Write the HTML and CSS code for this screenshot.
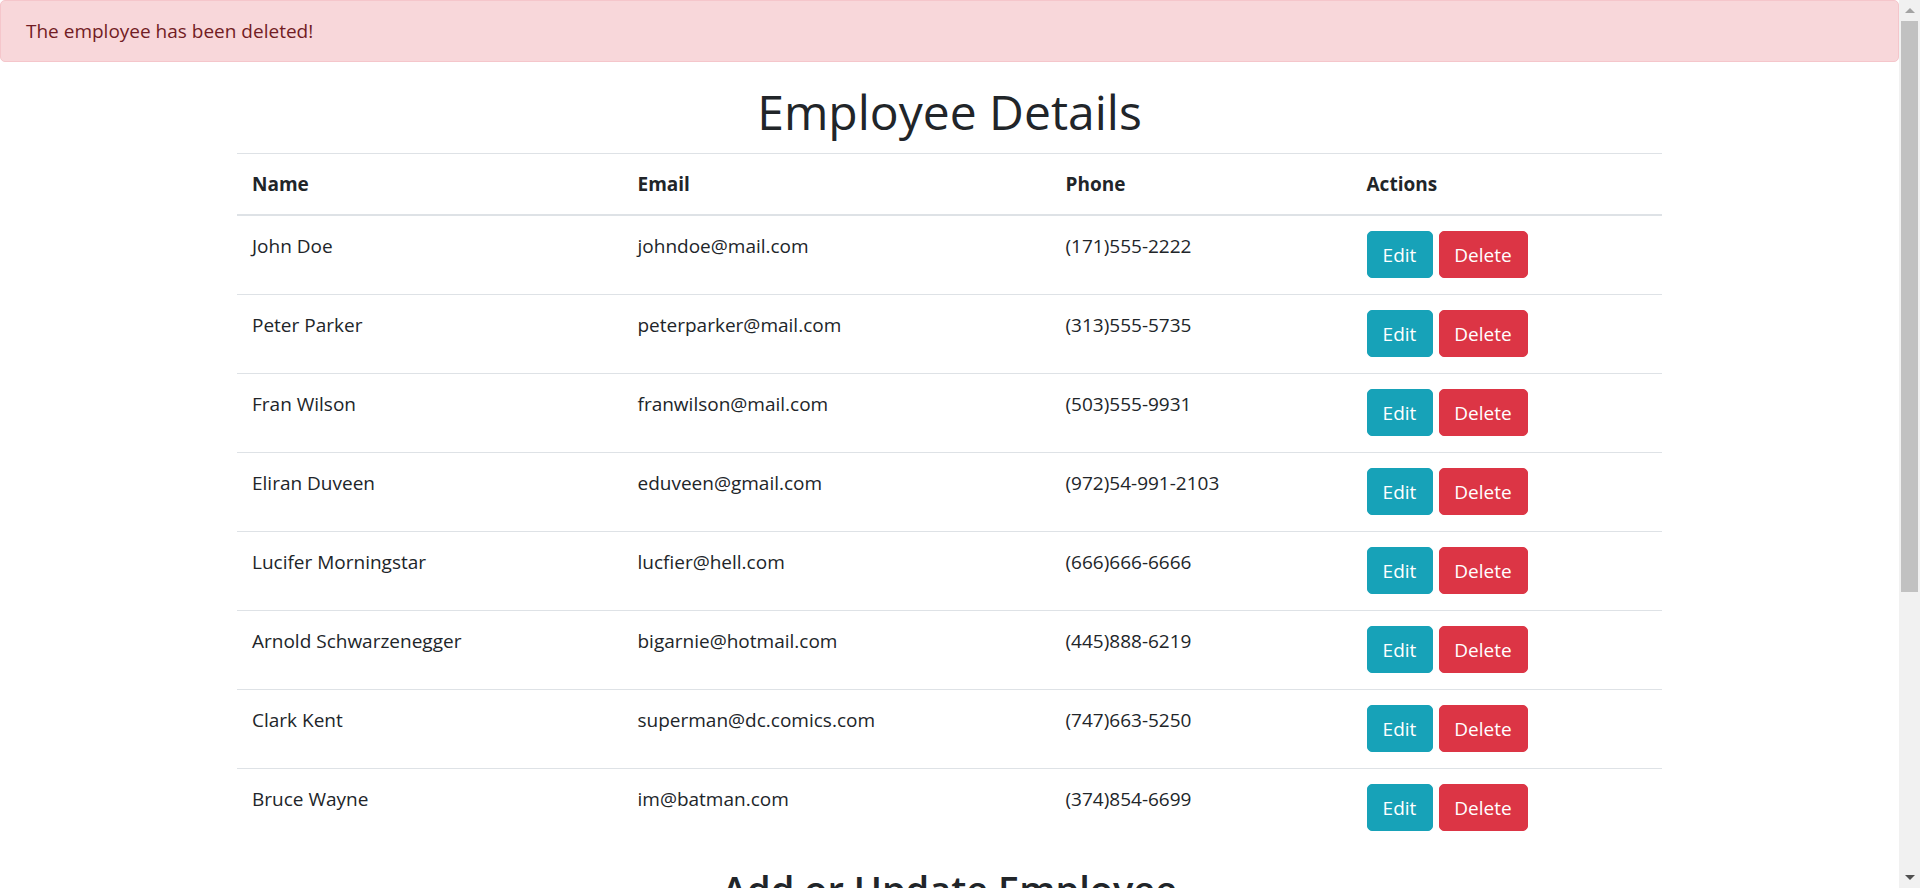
FILE: index.html
```html
<!DOCTYPE html>
<html lang="en">
<head>
<meta charset="utf-8">
<title>Employee Details</title>
<link rel="stylesheet" href="styles.css">
</head>
<body>
<div class="page">
  <main class="main">
    <div class="alert">The employee has been deleted!</div>
    <div class="container">
      <h1 class="title">Employee Details</h1>
      <table class="table">
        <colgroup>
          <col class="col-name"><col class="col-email"><col class="col-phone"><col class="col-actions">
        </colgroup>
        <thead>
          <tr><th>Name</th><th>Email</th><th>Phone</th><th>Actions</th></tr>
        </thead>
        <tbody>
          <tr><td>John Doe</td><td>johndoe@mail.com</td><td>(171)555-2222</td><td><div class="actions"><button class="btn btn-edit">Edit</button><button class="btn btn-delete">Delete</button></div></td></tr>
          <tr><td>Peter Parker</td><td>peterparker@mail.com</td><td>(313)555-5735</td><td><div class="actions"><button class="btn btn-edit">Edit</button><button class="btn btn-delete">Delete</button></div></td></tr>
          <tr><td>Fran Wilson</td><td>franwilson@mail.com</td><td>(503)555-9931</td><td><div class="actions"><button class="btn btn-edit">Edit</button><button class="btn btn-delete">Delete</button></div></td></tr>
          <tr><td>Eliran Duveen</td><td>eduveen@gmail.com</td><td>(972)54-991-2103</td><td><div class="actions"><button class="btn btn-edit">Edit</button><button class="btn btn-delete">Delete</button></div></td></tr>
          <tr><td>Lucifer Morningstar</td><td>lucfier@hell.com</td><td>(666)666-6666</td><td><div class="actions"><button class="btn btn-edit">Edit</button><button class="btn btn-delete">Delete</button></div></td></tr>
          <tr><td>Arnold Schwarzenegger</td><td>bigarnie@hotmail.com</td><td>(445)888-6219</td><td><div class="actions"><button class="btn btn-edit">Edit</button><button class="btn btn-delete">Delete</button></div></td></tr>
          <tr><td>Clark Kent</td><td>superman@dc.comics.com</td><td>(747)663-5250</td><td><div class="actions"><button class="btn btn-edit">Edit</button><button class="btn btn-delete">Delete</button></div></td></tr>
          <tr><td>Bruce Wayne</td><td>im@batman.com</td><td>(374)854-6699</td><td><div class="actions"><button class="btn btn-edit">Edit</button><button class="btn btn-delete">Delete</button></div></td></tr>
        </tbody>
      </table>
      <h2 class="subtitle">Add or Update Employee</h2>
      <form class="form">
        <div class="form-group"><label class="label">Name</label><input class="input" type="text"></div>
        <div class="form-group"><label class="label">Email</label><input class="input" type="email"></div>
        <div class="form-group"><label class="label">Phone</label><input class="input" type="text"></div>
        <button class="btn btn-submit" type="button">Submit</button>
      </form>
    </div>
  </main>
  <div class="scrollbar" aria-hidden="true">
    <div class="sb-btn"><span class="arrow-up"></span></div>
    <div class="sb-track"><div class="sb-thumb"></div></div>
    <div class="sb-btn"><span class="arrow-down"></span></div>
  </div>
</div>
</body>
</html>
```
FILE: styles.css
```css
html {
  font-size: 19px;
}
body {
  margin: 0;
  font-family: "Open Sans", "Segoe UI", sans-serif;
  font-size: 19px;
  line-height: 30px;
  color: #212529;
  background: #fff;
}
.page {
  display: flex;
  align-items: flex-start;
}
.main {
  flex: 1;
  min-width: 0;
}
.scrollbar {
  flex: 0 0 21px;
  height: 888px;
  display: flex;
  flex-direction: column;
  background: #f1f1f1;
}
.sb-btn {
  height: 21px;
  display: flex;
  align-items: center;
  justify-content: center;
}
.arrow-up {
  width: 0;
  height: 0;
  border-left: 5px solid transparent;
  border-right: 5px solid transparent;
  border-bottom: 5px solid #a3a3a3;
}
.arrow-down {
  width: 0;
  height: 0;
  border-left: 5px solid transparent;
  border-right: 5px solid transparent;
  border-top: 5px solid #505050;
}
.sb-track {
  flex: 1;
  padding: 0 2px;
}
.sb-thumb {
  height: 571px;
  background: #c1c1c1;
}
.alert {
  padding: 15px 25px;
  border: 1px solid #f5c6cb;
  border-radius: 5px;
  background: #f8d7da;
  color: #721c24;
  margin-bottom: 20px;
}
.container {
  max-width: 1425px;
  margin: 0 auto;
  padding-bottom: 20px;
}
.title {
  margin: 0 0 11px;
  font-size: 48px;
  font-weight: 400;
  line-height: 60px;
  text-align: center;
}
.table {
  width: 100%;
  border-collapse: collapse;
  table-layout: fixed;
  margin-bottom: 20px;
}
.col-name { width: 385.5px; }
.col-email { width: 428px; }
.col-phone { width: 301px; }
.table th,
.table td {
  padding: 15px 15px 16px;
  text-align: left;
  vertical-align: top;
  border-top: 1px solid #dee2e6;
}
.table thead th {
  padding: 15px;
  vertical-align: bottom;
  border-bottom: 2px solid #dee2e6;
  font-weight: 700;
}
.actions {
  display: flex;
  gap: 6px;
}
.btn {
  font-family: inherit;
  font-size: 19px;
  line-height: 30px;
  padding: 7.5px 0;
  border: 1px solid transparent;
  border-radius: 5px;
  color: #fff;
  cursor: pointer;
}
.btn-edit {
  width: 66px;
  background: #17a2b8;
  border-color: #17a2b8;
}
.btn-delete {
  width: 89px;
  background: #dc3545;
  border-color: #dc3545;
}
.subtitle {
  margin: 0 0 10px;
  font-size: 38px;
  font-weight: 600;
  line-height: 45.6px;
  text-align: center;
}
.form-group {
  display: flex;
  flex-direction: column;
  margin-bottom: 20px;
}
.label {
  margin-bottom: 10px;
}
.input {
  height: 47px;
  box-sizing: border-box;
  padding: 7.5px 15px;
  font: inherit;
  border: 1px solid #ced4da;
  border-radius: 5px;
}
.btn-submit {
  width: 100px;
  background: #007bff;
  border-color: #007bff;
}
```
